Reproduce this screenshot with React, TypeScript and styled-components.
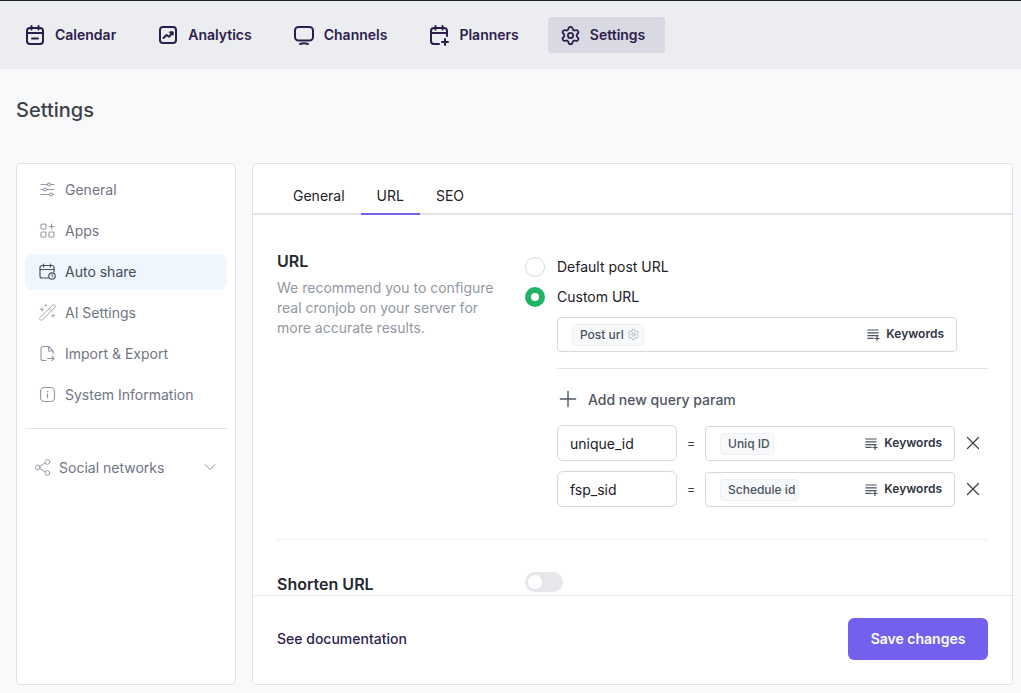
import React from 'react'
import styled, { createGlobalStyle } from 'styled-components'
import { ChevronDown, Plus, Settings as Gear, Share2, WandSparkles, X } from 'lucide-react'

const GlobalStyle = createGlobalStyle`
	html, body {
		margin: 0;
		padding: 0;
		background: #f8f9fb;
		font-family: Inter, "Liberation Sans", sans-serif;
	}
	* {
		box-sizing: border-box;
	}
`

const CalendarIcon = () => (
	<svg width="22" height="22" viewBox="0 0 22 22" fill="none" stroke="currentColor" strokeWidth="2" strokeLinecap="round" strokeLinejoin="round">
		<rect x="3" y="4" width="16" height="16" rx="3" />
		<path d="M3 9h16M7.5 2v3.5M14.5 2v3.5M8 14.5h6" />
	</svg>
)

const AnalyticsIcon = () => (
	<svg width="22" height="22" viewBox="0 0 22 22" fill="none" stroke="currentColor" strokeWidth="2" strokeLinecap="round" strokeLinejoin="round">
		<rect x="3" y="3" width="16" height="16" rx="3" />
		<path d="M6.5 14l3-3 2.5 1.8 3.5-4.3M13.2 8.2h2.5v2.4" />
	</svg>
)

const ChannelsIcon = () => (
	<svg width="22" height="22" viewBox="0 0 22 22" fill="none" stroke="currentColor" strokeWidth="2" strokeLinecap="round" strokeLinejoin="round">
		<rect x="2" y="3" width="18" height="13.5" rx="3.5" />
		<path d="M7 20c2.5-1 5.500-1 8 0" />
	</svg>
)

const PlannersIcon = () => (
	<svg width="22" height="22" viewBox="0 0 22 22" fill="none" stroke="currentColor" strokeWidth="2" strokeLinecap="round" strokeLinejoin="round">
		<path d="M19 12V7a3 3 0 0 0-3-3H6a3 3 0 0 0-3 3v10a3 3 0 0 0 3 3h5" />
		<path d="M3 9h16M7.500 2v3.500M14.500 2v3.500M17 15v6M14 18h6" />
	</svg>
)

const SlidersIcon = () => (
	<svg width="17" height="17" viewBox="0 0 17 17" fill="none" stroke="currentColor" strokeWidth="1.1" strokeLinecap="round">
		<path d="M2 3.500h6.500M11.500 3.500h3.500M2 8.500h2.500M7.500 8.500h7.500M2 13.500h8.500M13.500 13.500h1.500" />
		<circle cx="10" cy="3.500" r="1.500" />
		<circle cx="6" cy="8.500" r="1.500" />
		<circle cx="12" cy="13.500" r="1.500" />
	</svg>
)

const AppsIcon = () => (
	<svg width="17" height="17" viewBox="0 0 17 17" fill="none" stroke="currentColor" strokeWidth="1.1" strokeLinecap="round">
		<rect x="2" y="2" width="5" height="5" rx="1" />
		<rect x="2" y="10" width="5" height="5" rx="1" />
		<rect x="10" y="10" width="5" height="5" rx="1" />
		<path d="M12.500 2v5M10 4.500h5" />
	</svg>
)

const AutoShareIcon = () => (
	<svg width="17" height="17" viewBox="0 0 17 17" fill="none" stroke="currentColor" strokeWidth="1.2" strokeLinecap="round" strokeLinejoin="round">
		<path d="M15 9V4.500a2 2 0 0 0-2-2H3a2 2 0 0 0-2 2V13a2 2 0 0 0 2 2h6.500" />
		<path d="M1 6.500h14M4.500 1v3M11.500 1v3" />
		<circle cx="13" cy="13" r="3.200" />
		<path d="M13 11.500V13l1 .8" strokeWidth="1" />
	</svg>
)

const ImportIcon = () => (
	<svg width="17" height="17" viewBox="0 0 17 17" fill="none" stroke="currentColor" strokeWidth="1.1" strokeLinecap="round" strokeLinejoin="round">
		<path d="M7 15.500H4a2 2 0 0 1-2-2v-10a2 2 0 0 1 2-2h5.500L14 6v3" />
		<path d="M9.500 1.500V6H14M8.500 13.500H15M13 11.500l2 2-2 2" />
	</svg>
)

const InfoIcon = () => (
	<svg width="17" height="17" viewBox="0 0 17 17" fill="none" stroke="currentColor" strokeWidth="1.1" strokeLinecap="round">
		<rect x="1.500" y="1.500" width="14" height="14" rx="4" />
		<path d="M8.500 8v3.500" strokeWidth="1.300" />
		<path d="M8.500 5.500v.1" strokeWidth="1.500" />
	</svg>
)

const KeywordsIcon = () => (
	<svg width="13" height="13" viewBox="0 0 13 13" fill="none" stroke="currentColor" strokeWidth="1.200" strokeLinecap="square">
		<path d="M1 2h10M1 4.800h10M1 7.600h10M1 10.400h5M10 8.500v4M8 10.500h4" />
	</svg>
)

const navItems = [
	{ label: 'Calendar', icon: <CalendarIcon /> },
	{ label: 'Analytics', icon: <AnalyticsIcon /> },
	{ label: 'Channels', icon: <ChannelsIcon /> },
	{ label: 'Planners', icon: <PlannersIcon /> },
	{ label: 'Settings', icon: <Gear size={21} strokeWidth={2} />, active: true },
]

const sideItems = [
	{ label: 'General', icon: <SlidersIcon /> },
	{ label: 'Apps', icon: <AppsIcon /> },
	{ label: 'Auto share', icon: <AutoShareIcon />, active: true },
	{ label: 'AI Settings', icon: <WandSparkles size={19} strokeWidth={1.1} /> },
	{ label: 'Import & Export', icon: <ImportIcon /> },
	{ label: 'System Information', icon: <InfoIcon /> },
]

const params = [
	{ name: 'unique_id', value: 'Uniq ID' },
	{ name: 'fsp_sid', value: 'Schedule id' },
]

const App: React.FC = () => {
	return (
		<Page>
			<GlobalStyle />
			<TopNav>
				{navItems.map(item => (
					<NavItem key={item.label} $active={item.active}>
						{item.icon}
						{item.label}
					</NavItem>
				))}
			</TopNav>
			<Content>
				<PageTitle>Settings</PageTitle>
				<Columns>
					<Sidebar>
						{sideItems.map(item => (
							<SideItem key={item.label} $active={item.active}>
								<SideIcon $active={item.active}>{item.icon}</SideIcon>
								{item.label}
							</SideItem>
						))}
						<SideDivider />
						<SideGroup>
							<Share2 size={19} strokeWidth={1} />
							<SideGroupLabel>Social networks</SideGroupLabel>
							<ChevronDown size={20} strokeWidth={1.1} />
						</SideGroup>
					</Sidebar>
					<Panel>
						<Tabs>
							<Tab>General</Tab>
							<Tab $active>URL</Tab>
							<Tab>SEO</Tab>
						</Tabs>
						<PanelBody>
							<Section>
								<SectionInfo>
									<SectionTitle>URL</SectionTitle>
									<SectionText>
										We recommend you to configure real cronjob on your server for more accurate results.
									</SectionText>
								</SectionInfo>
								<SectionControls>
									<RadioRow>
										<Radio />
										Default post URL
									</RadioRow>
									<RadioRow>
										<Radio $checked />
										Custom URL
									</RadioRow>
									<Indented>
										<KeywordField>
											<Chip>
												Post url
												<Gear size={13} strokeWidth={1.6} color="#a5a9b2" />
											</Chip>
											<KeywordButton>
												<KeywordsIcon />
												Keywords
											</KeywordButton>
										</KeywordField>
										<ControlDivider />
										<AddParam>
											<Plus size={26} strokeWidth={1.3} />
											Add new query param
										</AddParam>
										<ParamList>
											{params.map(param => (
												<ParamRow key={param.name}>
													<ParamName>{param.name}</ParamName>
													<Equals>=</Equals>
													<ParamField>
														<Chip>{param.value}</Chip>
														<KeywordButton>
															<KeywordsIcon />
															Keywords
														</KeywordButton>
													</ParamField>
													<RemoveButton>
														<X size={22} strokeWidth={1.3} />
													</RemoveButton>
												</ParamRow>
											))}
										</ParamList>
									</Indented>
								</SectionControls>
							</Section>
							<SectionDivider />
							<ShortenSection>
								<ShortenTitle>Shorten URL</ShortenTitle>
								<Toggle>
									<ToggleKnob />
								</Toggle>
							</ShortenSection>
						</PanelBody>
						<PanelFooter>
							<DocsLink>See documentation</DocsLink>
							<SaveButton>Save changes</SaveButton>
						</PanelFooter>
					</Panel>
				</Columns>
			</Content>
		</Page>
	)
}

export default App

const Page = styled.div`
	height: 693px;
	display: flex;
	flex-direction: column;
	overflow: hidden;
	background: #f8f9fb;
`

const TopNav = styled.nav`
	height: 69px;
	flex-shrink: 0;
	display: flex;
	align-items: center;
	gap: 9px;
	padding-left: 12px;
	border-top: 1px solid #1d2126;
	background: #ecedf1;
`

const NavItem = styled.div<{ $active?: boolean }>`
	height: 36px;
	display: flex;
	align-items: center;
	gap: 9px;
	padding: 0 20px 2px 12px;
	border-radius: 4px;
	background: ${p => (p.$active ? '#d8d9e2' : 'transparent')};
	color: #2c1d4c;
	font-size: 14px;
	font-weight: 600;

	svg {
		margin-top: 2px;
	}
`

const Content = styled.div`
	flex: 1;
	min-height: 0;
	display: flex;
	flex-direction: column;
	padding: 0 8px 8px 16px;
`

const PageTitle = styled.h1`
	height: 94px;
	margin: 0;
	padding-top: 28px;
	color: #3d4149;
	font-size: 20px;
	line-height: 26px;
	font-weight: 500;
`

const Columns = styled.div`
	flex: 1;
	min-height: 0;
	display: grid;
	grid-template-columns: 220px 761px;
	gap: 16px;
`

const Sidebar = styled.aside`
	display: flex;
	flex-direction: column;
	gap: 5px;
	padding: 8px;
	background: #fff;
	border: 1px solid #e0e2e8;
	border-radius: 4px;
`

const SideItem = styled.div<{ $active?: boolean }>`
	height: 36px;
	flex-shrink: 0;
	display: flex;
	align-items: center;
	gap: 9px;
	padding: 0 0 2px 14px;
	border-radius: 8px;
	background: ${p => (p.$active ? '#eff6fe' : 'transparent')};
	color: ${p => (p.$active ? '#444b59' : '#6f7583')};
	font-size: 14px;
`

const SideIcon = styled.span<{ $active?: boolean }>`
	width: 17px;
	height: 17px;
	flex-shrink: 0;
	display: flex;
	align-items: center;
	justify-content: center;
	color: ${p => (p.$active ? '#4a5160' : '#9499a6')};

	svg {
		flex-shrink: 0;
	}
`

const SideDivider = styled.div`
	height: 1px;
	flex-shrink: 0;
	margin-top: 10px;
	background: #e0e2e8;
`

const SideGroup = styled.div`
	display: flex;
	align-items: center;
	gap: 7px;
	height: 36px;
	margin-top: 16px;
	padding: 0 7px 2px 8px;
	color: #6f7583;
	font-size: 14px;

	svg {
		color: #858a97;
	}
`

const SideGroupLabel = styled.span`
	flex: 1;
`

const Panel = styled.section`
	min-height: 0;
	display: flex;
	flex-direction: column;
	background: #fff;
	border: 1px solid #e0e2e8;
	border-radius: 4px;
	overflow: hidden;
`

const Tabs = styled.div`
	height: 51px;
	flex-shrink: 0;
	display: flex;
	padding-left: 24px;
	border-bottom: 2px solid #e0e2e8;
`

const Tab = styled.div<{ $active?: boolean }>`
	height: 51px;
	padding: 22px 16px 0;
	color: #1d2026;
	font-size: 14px;
	line-height: 20px;
	border-bottom: 2px solid ${p => (p.$active ? '#7361ee' : 'transparent')};
`

const PanelBody = styled.div`
	flex: 1;
	min-height: 0;
	padding: 36px 24px 0;
	overflow: hidden;
`

const Section = styled.div`
	display: grid;
	grid-template-columns: 248px 1fr;
`

const SectionInfo = styled.div`
	padding-right: 24px;
`

const SectionTitle = styled.h2`
	margin: 0 0 7px;
	color: #25282e;
	font-size: 16px;
	line-height: 20px;
	font-weight: 600;
`

const SectionText = styled.p`
	margin: 0;
	color: #9297a2;
	font-size: 14px;
	line-height: 20px;
`

const SectionControls = styled.div`
	padding-top: 6px;
	display: flex;
	flex-direction: column;
	gap: 10px;
`

const RadioRow = styled.label`
	display: flex;
	align-items: center;
	gap: 12px;
	color: #1d2026;
	font-size: 14px;
	line-height: 20px;
`

const Radio = styled.span<{ $checked?: boolean }>`
	width: 20px;
	height: 20px;
	border-radius: 50%;
	background: #fff;
	border: ${p => (p.$checked ? '6px solid #1eb464' : '1px solid #d5d8df')};
`

const Indented = styled.div`
	padding-left: 32px;
`

const KeywordField = styled.div`
	width: 400px;
	height: 35px;
	display: flex;
	align-items: center;
	justify-content: space-between;
	padding: 0 12px 0 14px;
	background: #fff;
	border: 1px solid #d5d8df;
	border-radius: 4px;
`

const Chip = styled.span`
	height: 22px;
	display: inline-flex;
	align-items: center;
	gap: 3px;
	padding: 0 3px 0 7px;
	color: #4a5160;
	background: #f8f9fb;
	border: 1px solid #eff0f3;
	border-radius: 4px;
	font-size: 12px;
	font-weight: 500;
`

const KeywordButton = styled.span`
	display: flex;
	align-items: center;
	gap: 6px;
	padding-bottom: 2px;
	color: #2f3542;
	font-size: 12px;
	font-weight: 600;

	svg {
		margin-top: 2px;
		color: #4a5160;
	}
`

const ControlDivider = styled.div`
	height: 1px;
	margin: 16px 0 0;
	background: #e0e2e8;
`

const AddParam = styled.div`
	height: 20px;
	margin-top: 20px;
	display: flex;
	align-items: center;
	gap: 7px;
	color: #4f5562;
	font-size: 14px;
	font-weight: 500;

	svg {
		margin-left: -2px;
	}
`

const ParamList = styled.div`
	margin-top: 16px;
	display: flex;
	flex-direction: column;
	gap: 10px;
`

const ParamRow = styled.div`
	display: flex;
	align-items: center;
`

const ParamName = styled.div`
	width: 120px;
	height: 36px;
	display: flex;
	align-items: center;
	padding-left: 12px;
	color: #1d2026;
	font-size: 14px;
	background: #fff;
	border: 1px solid #d5d8df;
	border-radius: 6px;
`

const Equals = styled.span`
	width: 28px;
	text-align: center;
	color: #3d4149;
	font-size: 13px;
`

const ParamField = styled(KeywordField)`
	width: 250px;
	margin-top: 1px;
`

const RemoveButton = styled.span`
	display: flex;
	margin-left: 7px;
	color: #3d4149;
`

const SectionDivider = styled.div`
	height: 1px;
	margin-top: 32px;
	background: #eff0f3;
`

const ShortenSection = styled.div`
	display: grid;
	grid-template-columns: 248px 1fr;
	padding-top: 32px;
`

const ShortenTitle = styled.h2`
	margin: 2px 0 0;
	color: #25282e;
	font-size: 16px;
	line-height: 20px;
	font-weight: 600;
`

const Toggle = styled.div`
	width: 38px;
	height: 20px;
	padding: 3px;
	background: #e5e7eb;
	border-radius: 10px;
`

const ToggleKnob = styled.div`
	width: 14px;
	height: 14px;
	background: #fff;
	border-radius: 50%;
`

const PanelFooter = styled.footer`
	height: 89px;
	flex-shrink: 0;
	display: flex;
	align-items: center;
	justify-content: space-between;
	padding: 0 24px 2px;
	border-top: 1px solid #e6e8ec;
	background: #fff;
`

const DocsLink = styled.span`
	padding-bottom: 2px;
	color: #2c1d4c;
	font-size: 14px;
	font-weight: 500;
`

const SaveButton = styled.button`
	width: 140px;
	height: 42px;
	padding-bottom: 2px;
	border: none;
	border-radius: 6px;
	background: #7361ee;
	color: #fff;
	font-family: inherit;
	font-size: 14px;
	font-weight: 600;
`
